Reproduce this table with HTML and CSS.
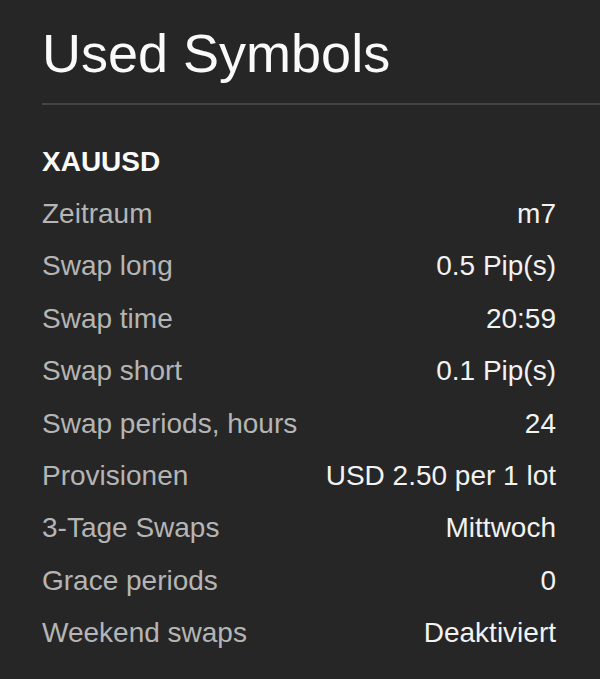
FILE: index.html
```html
<!DOCTYPE html>
<html>
<head>
    <title>Used Symbols</title>
    <link rel="stylesheet" href="styles.css">
</head>
<body>

<div class="panel">
    <h1>Used Symbols</h1>

    <div class="symbol">
        <h2>XAUUSD</h2>
        <div class="row"><span class="label">Zeitraum</span><span class="value">m7</span></div>
        <div class="row"><span class="label">Swap long</span><span class="value">0.5 Pip(s)</span></div>
        <div class="row"><span class="label">Swap time</span><span class="value">20:59</span></div>
        <div class="row"><span class="label">Swap short</span><span class="value">0.1 Pip(s)</span></div>
        <div class="row"><span class="label">Swap periods, hours</span><span class="value">24</span></div>
        <div class="row"><span class="label">Provisionen</span><span class="value">USD 2.50 per 1 lot</span></div>
        <div class="row"><span class="label">3-Tage Swaps</span><span class="value">Mittwoch</span></div>
        <div class="row"><span class="label">Grace periods</span><span class="value">0</span></div>
        <div class="row"><span class="label">Weekend swaps</span><span class="value">Deaktiviert</span></div>
    </div>
</div>

</body>
</html>
```
FILE: styles.css
```css
body {
    margin: 0;
    background-color: #262626;
    font-family: "Liberation Sans", Arial, sans-serif;
}

.panel {
    padding: 22px 0 0 42px;
}

h1 {
    margin: 0;
    font-size: 54px;
    font-weight: normal;
    line-height: 62px;
    color: #fafafa;
    padding-bottom: 19px;
    border-bottom: 2px solid #444;
}

.symbol {
    margin-top: 31px;
    padding-right: 44px;
}

h2 {
    margin: 0;
    font-size: 28px;
    line-height: 52px;
    color: #fafafa;
}

.row {
    display: flex;
    justify-content: space-between;
    font-size: 28px;
    line-height: 52.4px;
}

.label {
    color: #b5b5b5;
}

.value {
    color: #f2f2f2;
}
```
